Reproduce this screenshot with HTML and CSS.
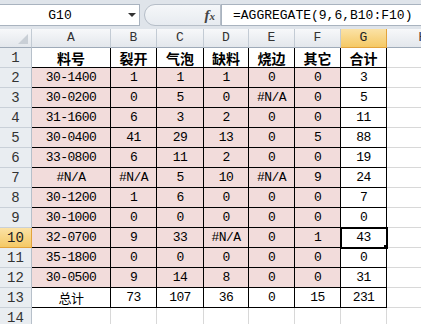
FILE: index.html
```html
<!DOCTYPE html>
<html lang="zh">
<head>
    <meta charset="UTF-8">
    <meta name="viewport" content="width=device-width, initial-scale=1.0">
    <title>AGGREGATE</title>
    <link rel="stylesheet" href="styles.css">
</head>
<body>
<div class="formula-bar">
    <div class="name-box"><span class="name">G10</span><span class="arrow"></span></div>
    <div class="fx-zone"><span class="fx">f<small>x</small></span></div>
    <div class="formula">=AGGREGATE(9,6,B10:F10)</div>
</div>
<table class="sheet">
    <colgroup>
        <col style="width:32px">
        <col style="width:79px">
        <col style="width:46px">
        <col style="width:47px">
        <col style="width:45px">
        <col style="width:46px">
        <col style="width:46px">
        <col style="width:46px">
        <col style="width:72px">
    </colgroup>
    <tr class="heads">
        <th class="corner"><span class="tri"></span></th>
        <th>A</th><th>B</th><th>C</th><th>D</th><th>E</th><th>F</th><th class="sel">G</th><th>H</th>
    </tr>
    <tr class="r top">
        <th>1</th><td>料号</td><td>裂开</td><td>气泡</td><td>缺料</td><td>烧边</td><td>其它</td><td>合计</td><td class="x"></td>
    </tr>
    <tr class="r d">
        <th>2</th><td>30-1400</td><td>1</td><td>1</td><td>1</td><td>0</td><td>0</td><td>3</td><td class="x"></td>
    </tr>
    <tr class="r d">
        <th>3</th><td>30-0200</td><td>0</td><td>5</td><td>0</td><td>#N/A</td><td>0</td><td>5</td><td class="x"></td>
    </tr>
    <tr class="r d">
        <th>4</th><td>31-1600</td><td>6</td><td>3</td><td>2</td><td>0</td><td>0</td><td>11</td><td class="x"></td>
    </tr>
    <tr class="r d">
        <th>5</th><td>30-0400</td><td>41</td><td>29</td><td>13</td><td>0</td><td>5</td><td>88</td><td class="x"></td>
    </tr>
    <tr class="r d">
        <th>6</th><td>33-0800</td><td>6</td><td>11</td><td>2</td><td>0</td><td>0</td><td>19</td><td class="x"></td>
    </tr>
    <tr class="r d">
        <th>7</th><td>#N/A</td><td>#N/A</td><td>5</td><td>10</td><td>#N/A</td><td>9</td><td>24</td><td class="x"></td>
    </tr>
    <tr class="r d">
        <th>8</th><td>30-1200</td><td>1</td><td>6</td><td>0</td><td>0</td><td>0</td><td>7</td><td class="x"></td>
    </tr>
    <tr class="r d">
        <th>9</th><td>30-1000</td><td>0</td><td>0</td><td>0</td><td>0</td><td>0</td><td>0</td><td class="x"></td>
    </tr>
    <tr class="r d">
        <th class="sel">10</th><td>32-0700</td><td>9</td><td>33</td><td>#N/A</td><td>0</td><td>1</td><td class="active">43</td><td class="x"></td>
    </tr>
    <tr class="r d">
        <th>11</th><td>35-1800</td><td>0</td><td>0</td><td>0</td><td>0</td><td>0</td><td>0</td><td class="x"></td>
    </tr>
    <tr class="r d">
        <th>12</th><td>30-0500</td><td>9</td><td>14</td><td>8</td><td>0</td><td>0</td><td>31</td><td class="x"></td>
    </tr>
    <tr class="r">
        <th>13</th><td class="cn">总计</td><td>73</td><td>107</td><td>36</td><td>0</td><td>15</td><td>231</td><td class="x"></td>
    </tr>
    <tr>
        <th>14</th><td></td><td></td><td></td><td></td><td></td><td></td><td></td><td></td>
    </tr>
</table>
</body>
</html>
```
FILE: styles.css
```css
body {
    margin: 0;
    overflow: hidden;
    background-color: #fff;
    font-family: "Liberation Mono", "Noto Sans CJK SC", monospace;
    color: #000;
}

/* 编辑栏 */
.formula-bar {
    display: flex;
    height: 29px;
    padding: 4px 0 3px;
    box-sizing: border-box;
    background-color: #dfe4ea;
}

.name-box {
    width: 140px;
    display: flex;
    align-items: center;
    background-color: #fff;
    border: 1px solid #a9b3bf;
    border-left: none;
    box-sizing: border-box;
}

.name {
    flex: 1;
    text-align: center;
    font-size: 13px;
    padding-right: 8px;
}

.arrow {
    width: 0;
    height: 0;
    margin-right: 3px;
    border-left: 4px solid transparent;
    border-right: 4px solid transparent;
    border-top: 4px solid #333;
}

.fx-zone {
    width: 77px;
    margin-left: 4px;
    display: flex;
    align-items: center;
    justify-content: flex-end;
    padding-right: 5px;
    box-sizing: border-box;
    background: linear-gradient(#f5f7f9, #e7ebf0);
    border: 1px solid #b6bec8;
    border-radius: 11px 0 0 11px;
}

.fx {
    font-family: "Liberation Serif", serif;
    font-style: italic;
    font-weight: bold;
    font-size: 15px;
    color: #444;
}

.fx small {
    font-size: 11px;
}

.formula {
    flex: 1;
    display: flex;
    align-items: center;
    padding-left: 11px;
    font-size: 13px;
    background-color: #fff;
    border: 1px solid #a9b3bf;
    border-right: none;
    white-space: nowrap;
}

/* 表格 */
.sheet {
    border-collapse: separate;
    border-spacing: 0;
    table-layout: fixed;
    width: 459px;
}

.sheet td, .sheet th {
    box-sizing: border-box;
    height: 20px;
    padding: 0;
    text-align: center;
    white-space: nowrap;
    overflow: hidden;
    font-weight: normal;
    font-size: 13px;
    letter-spacing: -0.6px;
    line-height: 18px;
    border-right: 1px solid #d8d8d8;
    border-bottom: 1px solid #d8d8d8;
}

.sheet th {
    background-color: #e9edf1;
    color: #333;
    font-size: 14px;
    letter-spacing: 0;
    border-right-color: #b7c0ca;
    border-bottom-color: #c9d0d8;
}

.heads th {
    height: 19px;
    font-size: 13px;
    background: linear-gradient(#f7f8fa, #e3e7ec);
    border-right-color: #c3cbd4;
    border-bottom-color: #9eaab8;
}

.corner {
    position: relative;
}

.tri {
    position: absolute;
    right: 3px;
    bottom: 3px;
    width: 0;
    height: 0;
    border-left: 10px solid transparent;
    border-bottom: 10px solid #c9cfd6;
}

.sheet th.sel {
    background: linear-gradient(#fbe2a6, #f5c965);
    border-right-color: #e2a33c;
    border-bottom-color: #e2a33c;
    color: #222;
}

.r td {
    border-right-color: #000;
    border-bottom-color: #000;
}

.r td.x {
    border-right-color: #d8d8d8;
    border-bottom-color: #d8d8d8;
}

.d td:nth-child(-n+7) {
    background-color: #f2dcdb;
}

.top td, .cn {
    font-family: "Noto Sans CJK SC", sans-serif;
    font-size: 14px;
    letter-spacing: 0;
}

.top td {
    font-weight: bold;
}

.active {
    position: relative;
    outline: 2px solid #000;
    outline-offset: -1px;
}

.active::after {
    content: "";
    position: absolute;
    right: -4px;
    bottom: -4px;
    width: 5px;
    height: 5px;
    background-color: #000;
    border: 1px solid #fff;
}
```
